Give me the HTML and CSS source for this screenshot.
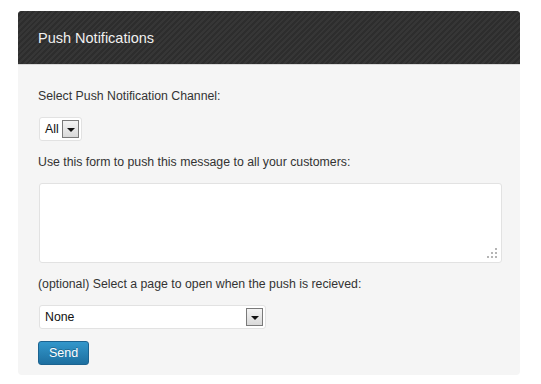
FILE: index.html
```html
<!DOCTYPE html>
<html>
<head>
<meta charset="utf-8">
<link rel="stylesheet" href="styles.css">
</head>
<body>
<div class="page">
  <div class="panel">
    <div class="panel-head"><h2 class="title">Push Notifications</h2></div>
    <div class="panel-body">
      <p class="label first">Select Push Notification Channel:</p>
      <div class="select small">
        <span class="select-text">All</span>
        <span class="arrow-btn"><span class="tri"></span></span>
      </div>
      <p class="label">Use this form to push this message to all your customers:</p>
      <div class="textarea">
        <svg class="grip" width="10" height="10" viewBox="0 0 10 10">
          <rect x="8" y="0" width="2" height="2" fill="#b5b5b5"/>
          <rect x="4" y="4" width="2" height="2" fill="#b5b5b5"/>
          <rect x="8" y="4" width="2" height="2" fill="#b5b5b5"/>
          <rect x="0" y="8" width="2" height="2" fill="#b5b5b5"/>
          <rect x="4" y="8" width="2" height="2" fill="#b5b5b5"/>
          <rect x="8" y="8" width="2" height="2" fill="#b5b5b5"/>
        </svg>
      </div>
      <p class="label">(optional) Select a page to open when the push is recieved:</p>
      <div class="select wide">
        <span class="select-text">None</span>
        <span class="arrow-btn"><span class="tri"></span></span>
      </div>
      <button class="btn">Send</button>
    </div>
  </div>
</div>
</body>
</html>
```

FILE: styles.css
```css
html, body {
  margin: 0;
  padding: 0;
  background: #ffffff;
}
.page {
  padding: 11px 21px 10px 18px;
  font-family: "Liberation Sans", Arial, sans-serif;
}
.panel {
  width: 502px;
  background: #f5f5f5;
  border-radius: 4px;
}
.panel-head {
  height: 54px;
  box-sizing: border-box;
  border-radius: 4px 4px 0 0;
  background-color: #303030;
  background-image: repeating-linear-gradient(-45deg, #2d2d2d 0px, #2d2d2d 2px, #363636 2px, #363636 4px);
  border-bottom: 1px solid #d8d8d8;
  display: flex;
  align-items: center;
  padding-left: 20px;
}
.title {
  margin: 0;
  font-weight: normal;
  font-size: 14.5px;
  color: #f0f0f0;
}
.panel-body {
  padding: 0 19px 10px 21px;
}
.label {
  margin: 14px 0 0 -1px;
  font-size: 12.3px;
  line-height: 15px;
  color: #333333;
}
.label.first {
  margin-top: 24px;
}
.select {
  box-sizing: border-box;
  height: 24px;
  background: #ffffff;
  border: 1px solid #e2e2e2;
  border-radius: 3px;
  display: flex;
  align-items: center;
  justify-content: space-between;
  padding: 0 2px 0 5px;
  margin-top: 13px;
}
.select.small {
  width: 43px;
}
.select.wide {
  width: 227px;
}
.select-text {
  font-size: 12.3px;
  color: #111111;
}
.arrow-btn {
  box-sizing: border-box;
  width: 17px;
  height: 18px;
  border: 1px solid #7a7a7a;
  background: linear-gradient(#f4f4f4, #d9d9d9);
  display: flex;
  align-items: center;
  justify-content: center;
}
.tri {
  width: 0;
  height: 0;
  border-left: 4px solid transparent;
  border-right: 4px solid transparent;
  border-top: 4px solid #111111;
  margin-top: 1px;
}
.textarea {
  box-sizing: border-box;
  width: 463px;
  height: 80px;
  margin-top: 13px;
  background: #ffffff;
  border: 1px solid #e2e2e2;
  border-radius: 3px;
  display: flex;
  justify-content: flex-end;
  align-items: flex-end;
  padding: 0 4px 4px 0;
}
.grip {
  display: block;
}
.btn {
  display: block;
  margin: 12px 0 0 -1px;
  width: 51px;
  height: 24px;
  box-sizing: border-box;
  border: 1px solid #1c6390;
  border-radius: 3px;
  background: linear-gradient(#3397cb, #1d6fa0);
  color: #ffffff;
  font-family: "Liberation Sans", Arial, sans-serif;
  font-size: 12.5px;
  text-shadow: 0 -1px 0 rgba(0,0,0,0.25);
  padding: 0;
}
```
